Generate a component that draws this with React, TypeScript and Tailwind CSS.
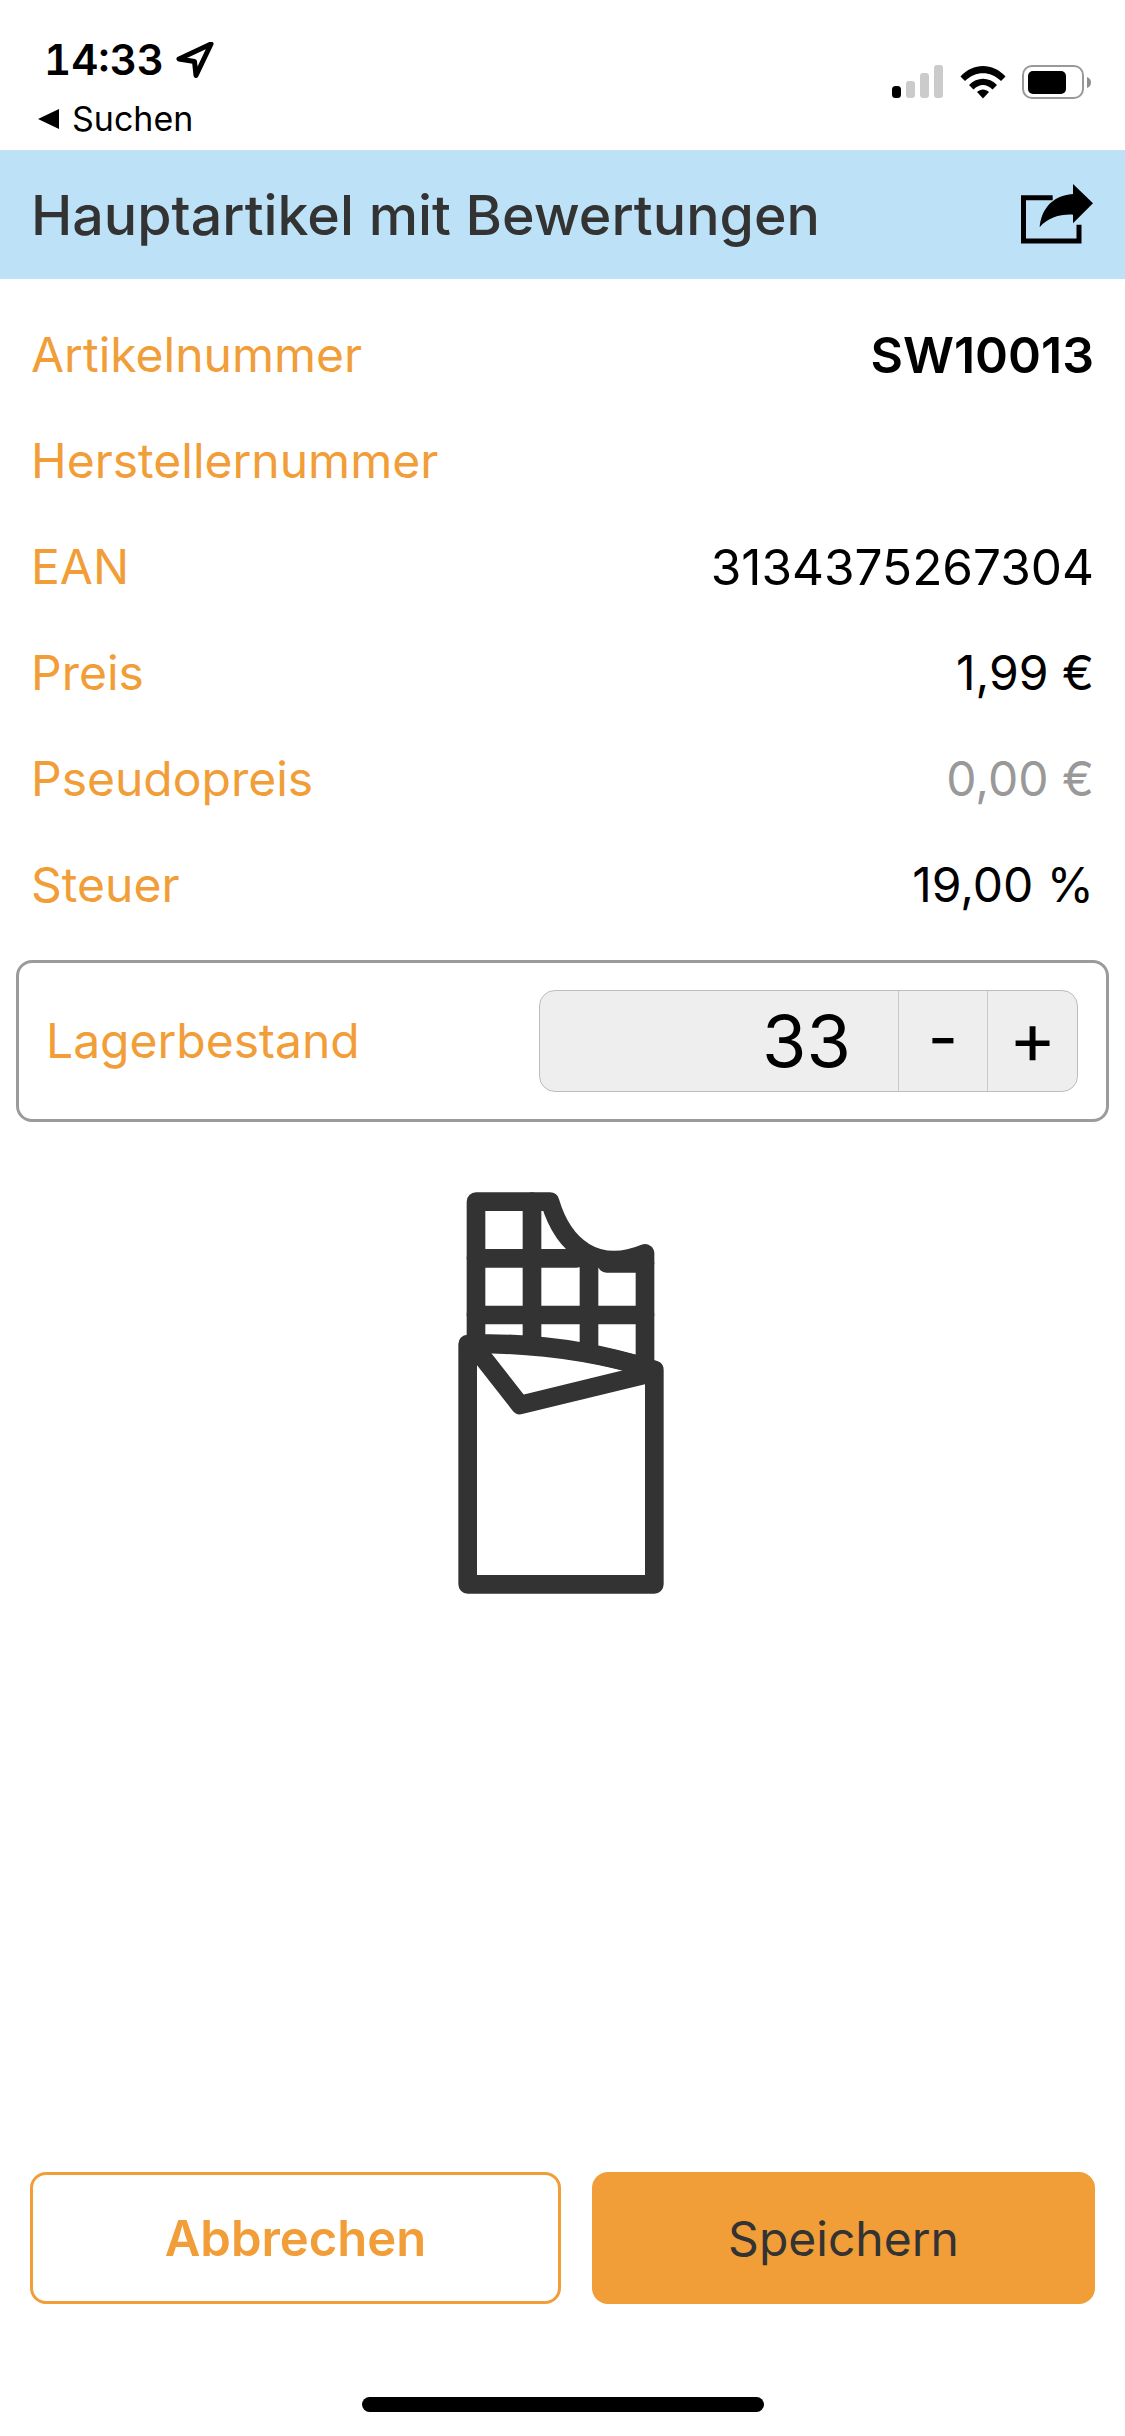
const Row = ({ label, value, cls = "text-[48px]" }: { label: string; value: string; cls?: string }) => (
  <div className="flex h-[106px] items-center justify-between pl-[31px] pr-[31px]">
    <span className="text-[48px] text-[#f19d38]">{label}</span>
    <span className={cls}>{value}</span>
  </div>
);

const Signal = () => (
  <svg width="54" height="34" viewBox="0 0 54 34" className="block">
    <rect x="0" y="21" width="9" height="12" rx="3.5" fill="#000" />
    <rect x="14" y="16" width="9" height="17" rx="3" fill="#cbcbcb" />
    <rect x="28" y="8" width="9" height="25" rx="3" fill="#cbcbcb" />
    <rect x="42" y="0" width="9" height="33" rx="3" fill="#cbcbcb" />
  </svg>
);

const Wifi = () => (
  <svg width="46" height="34" viewBox="0 0 46 34" className="block">
    <path d="M0.5 11.5 C13 -2.5 33 -2.5 45.5 11.5 L41 16 C30.5 5.5 15.5 5.5 5 16 Z" fill="#000" />
    <path d="M9 20 C17 11.5 29 11.5 37 20 L32.5 24.5 C26.5 18.5 19.5 18.5 13.5 24.5 Z" fill="#000" />
    <path d="M17 27 C20.5 23.5 25.5 23.5 29 27 L23 33.5 Z" fill="#000" />
  </svg>
);

const Battery = () => (
  <div className="flex items-center">
    <div className="flex h-[34px] w-[62px] items-center rounded-[10px] border-[2.5px] border-[#999999] pl-[3.5px]">
      <div className="h-[23px] w-[38px] rounded-[5px] bg-black" />
    </div>
    <svg width="4" height="11" viewBox="0 0 4 11" className="ml-[3px] block">
      <path d="M0 0 C3 1 4 3 4 5.5 C4 8 3 10 0 11 Z" fill="#8f8f8f" />
    </svg>
  </div>
);

const Share = () => (
  <svg width="74" height="62" viewBox="0 0 222 186" className="block">
    <path d="M95 41 H7.5 V171 H174 V122" fill="none" stroke="#000" strokeWidth="15" />
    <path d="M156 0 L216 58 L156 118 V92 C120 90 80 100 56 130 C60 80 90 35 156 30 Z" fill="#000" />
  </svg>
);

const Chocolate = () => (
  <svg width="280" height="440" viewBox="0 0 840 1320" className="block" fill="none" stroke="#333333" strokeWidth="56" strokeLinejoin="round" strokeLinecap="round">
    <path d="M168 520 V95 H390 C430 230 530 310 675 250 V590" />
    <path d="M168 265 H470 M168 435 H675 M336 95 V520 M507 270 V540 M560 280 H675" />
    <path d="M143 522 C320 515 500 535 703 600 V1243 H143 Z" fill="#fff" />
    <path d="M175 545 L300 705 L690 610" />
    <path d="M170 522 C340 522 520 545 690 595" />
  </svg>
);

export default function App() {
  return (
    <div className="flex h-[2436px] w-[1125px] flex-col bg-white font-['Inter',sans-serif] text-black">
      <header className="flex h-[150px] items-start justify-between">
        <div className="pl-[38px] pt-[36px]">
          <div className="flex items-center pl-[6px]">
            <span className="text-[42px] font-semibold leading-[48px] tabular-nums">14:33</span>
            <svg width="38" height="36" viewBox="0 0 38 36" className="ml-[12px] block">
              <path d="M35 2 L3 17 L18.5 19.5 L20 33.5 Z" fill="none" stroke="#000" strokeWidth="5" strokeLinejoin="round" />
            </svg>
          </div>
          <div className="mt-[17px] flex items-center">
            <svg width="22" height="20" viewBox="0 0 22 20" className="block">
              <path d="M21 0 V20 L0 10 Z" fill="#000" />
            </svg>
            <span className="ml-[12px] text-[34px] leading-[36px]">Suchen</span>
          </div>
        </div>
        <div className="flex items-center pr-[34px] pt-[65px]">
          <Signal />
          <div className="ml-[14px]"><Wifi /></div>
          <div className="ml-[16px]"><Battery /></div>
        </div>
      </header>

      <div className="flex h-[129px] items-center justify-between bg-[#bde2f8] pl-[31px] pr-[30px]">
        <h1 className="text-[55.5px] font-medium text-[#333333]">Hauptartikel mit Bewertungen</h1>
        <Share />
      </div>

      <div className="pt-[23px]">
        <Row label="Artikelnummer" value="SW10013" cls="text-[50px] font-semibold" />
        <Row label="Herstellernummer" value="" />
        <Row label="EAN" value="3134375267304" cls="text-[49.5px]" />
        <Row label="Preis" value="1,99 €" />
        <Row label="Pseudopreis" value="0,00 €" cls="text-[48px] text-[#999999]" />
        <Row label="Steuer" value="19,00 %" />
      </div>

      <div className="mx-[16px] mt-[22px] flex h-[162px] items-center justify-between rounded-[16px] border-[3px] border-[#9b9b9b] pl-[27px] pr-[28px]">
        <span className="text-[48px] text-[#f19d38]">Lagerbestand</span>
        <div className="flex h-[102px] w-[539px] overflow-hidden rounded-[16px] border border-[#bdbdbd] bg-[#eeeeee] text-black">
          <div className="flex w-[359px] items-center justify-end border-r border-[#c9c9c9] pr-[47px] text-[72px]">33</div>
          <div className="flex w-[89px] items-center justify-center border-r border-[#c9c9c9] pb-[8px] text-[66px]">-</div>
          <div className="flex flex-1 items-center justify-center pb-[6px] text-[72px]">+</div>
        </div>
      </div>

      <div className="mt-[48px] flex justify-center pr-[6px]">
        <Chocolate />
      </div>

      <div className="mt-[562px] flex gap-[31px] pl-[30px] pr-[30px]">
        <button className="flex h-[132px] w-[531px] items-center justify-center rounded-[16px] border-[3px] border-[#f19d38] pt-[2px] text-[49px] font-semibold text-[#f19d38]">Abbrechen</button>
        <button className="flex h-[132px] flex-1 items-center justify-center rounded-[16px] bg-[#f19d38] pt-[2px] text-[48px] text-[#333333]">Speichern</button>
      </div>

      <div className="mt-[93px] flex justify-center">
        <div className="h-[15px] w-[402px] rounded-full bg-black" />
      </div>
    </div>
  );
}
